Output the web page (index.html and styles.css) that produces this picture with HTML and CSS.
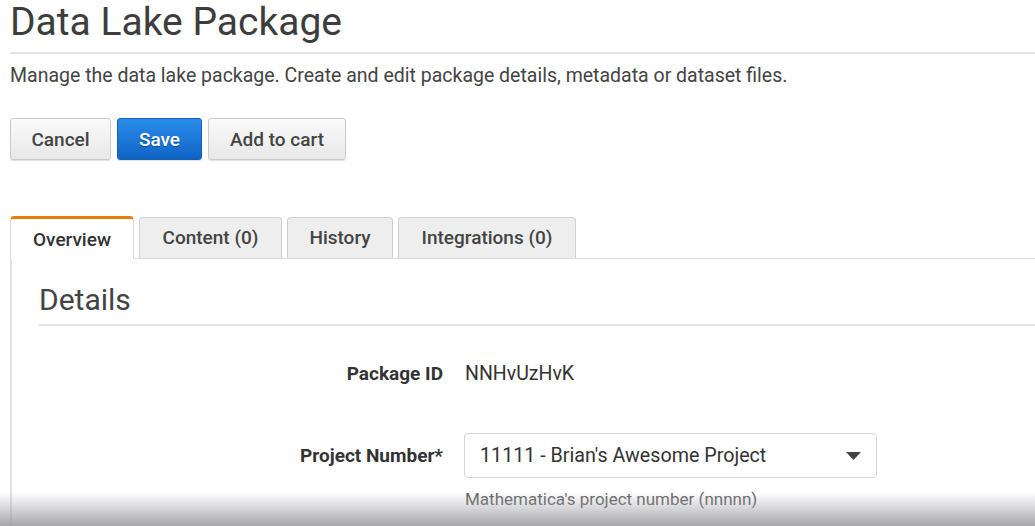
FILE: index.html
```html
<!DOCTYPE html>
<html lang="en">
<head>
<meta charset="utf-8">
<title>Data Lake Package</title>
<link rel="stylesheet" href="styles.css">
</head>
<body>
<div class="page">
  <h1 class="title">Data Lake Package</h1>
  <p class="subtitle">Manage the data lake package. Create and edit package details, metadata or dataset files.</p>
  <div class="actions">
    <button class="btn">Cancel</button>
    <button class="btn btn-primary">Save</button>
    <button class="btn">Add to cart</button>
  </div>
  <div class="tabs">
    <div class="tab active">Overview</div>
    <div class="tab">Content (0)</div>
    <div class="tab">History</div>
    <div class="tab">Integrations (0)</div>
  </div>
  <div class="panel">
    <h2 class="section-title">Details</h2>
    <div class="form">
      <div class="row row-id">
        <div class="label">Package ID</div>
        <div class="value">NNHvUzHvK</div>
      </div>
      <div class="row row-select">
        <div class="label">Project Number*</div>
        <div class="field">
          <div class="select">
            <span>11111 - Brian's Awesome Project</span>
            <svg class="caret" width="15" height="8" viewBox="0 0 15 8"><path d="M0 0H15L7.5 8Z" fill="#444"/></svg>
          </div>
          <div class="help">Mathematica's project number (nnnnn)</div>
        </div>
      </div>
    </div>
  </div>
</div>
<div class="bottom-shade"></div>
</body>
</html>
```
FILE: styles.css
```css
html, body {
  margin: 0;
  padding: 0;
  background: #fff;
  font-family: Roboto, "Liberation Sans", Arial, sans-serif;
  color: #444;
  overflow: hidden;
}
.page {
  padding: 0 0 0 10px;
}
.title {
  margin: 0;
  font-size: 39px;
  font-weight: 400;
  line-height: 44px;
  color: #3d3d3d;
  border-bottom: 2px solid #e4e4e4;
  height: 54px;
  box-sizing: border-box;
}
.subtitle {
  margin: 11px 0 0;
  font-size: 19.5px;
  line-height: 22px;
  color: #444;
}
.actions {
  display: flex;
  gap: 6px;
  margin-top: 31px;
}
.btn {
  font-family: Roboto, "Liberation Sans", Arial, sans-serif;
  font-size: 19px;
  font-weight: 500;
  color: #444;
  height: 42px;
  padding: 0 20px;
  border: 1px solid #c9c9c9;
  border-radius: 3px;
  background: linear-gradient(#fafafa, #e8e8e8);
  box-shadow: 0 1px 1px rgba(0,0,0,0.12);
}
.btn:first-child { width: 101px; }
.btn-primary {
  width: 85px;
  padding: 0;
  color: #fff;
  border-color: #145fae;
  background: linear-gradient(#2b8cec, #0f64c4);
  text-shadow: 0 1px 1px rgba(0,0,0,0.35);
}
.actions .btn:last-child { width: 138px; }
.tabs {
  display: flex;
  align-items: flex-end;
  gap: 5px;
  margin-top: 56px;
  border-bottom: 1px solid #dcdcdc;
  height: 42px;
}
.tab {
  height: 41px;
  box-sizing: border-box;
  display: flex;
  align-items: center;
  justify-content: center;
  font-size: 19px;
  font-weight: 500;
  color: #444;
  background: #eeeeee;
  border: 1px solid #d0d0d0;
  border-bottom: none;
  border-radius: 4px 4px 0 0;
  padding: 0 20px 2px;
}
.tab:nth-child(2) { width: 143px; }
.tab:nth-child(3) { width: 106px; }
.tab:nth-child(4) { width: 178px; }
.tab.active {
  width: 124px;
  height: 43px;
  margin-bottom: -1px;
  background: #fff;
  border: 1px solid #dcdcdc;
  border-top: 3px solid #e8800f;
  border-bottom: none;
  padding-bottom: 0;
  color: #333;
}
.panel {
  border-left: 2px solid #e2e2e2;
  padding-left: 27px;
  height: 267px;
  box-sizing: border-box;
}
.section-title {
  margin: 0;
  padding-top: 24px;
  font-size: 30px;
  font-weight: 400;
  line-height: 34px;
  color: #444;
  height: 67px;
  box-sizing: border-box;
  border-bottom: 2px solid #e4e4e4;
}
.form {
  padding-top: 35px;
}
.row {
  display: grid;
  grid-template-columns: 404px 1fr;
  column-gap: 22px;
}
.label {
  text-align: right;
  font-size: 19px;
  font-weight: 700;
  color: #333;
}
.row-id .label, .row-id .value {
  line-height: 26px;
}
.value {
  font-size: 19.5px;
  color: #333;
}
.row-select {
  margin-top: 46px;
}
.row-select .label {
  line-height: 45px;
}
.select {
  width: 413px;
  height: 45px;
  box-sizing: border-box;
  margin-left: -1px;
  border: 1px solid #d6d6d6;
  border-radius: 4px;
  display: flex;
  align-items: center;
  justify-content: space-between;
  padding: 0 15px 0 15px;
  font-size: 19.7px;
  color: #333;
}
.caret { display: block; }
.help {
  margin-top: 11px;
  font-size: 17px;
  line-height: 20px;
  color: #666;
}
.bottom-shade {
  position: fixed;
  left: 0;
  right: 0;
  bottom: 0;
  height: 34px;
  background: linear-gradient(rgba(160,160,165,0), rgba(160,160,165,0.35) 40%, rgba(150,150,156,0.85));
  pointer-events: none;
}
```
